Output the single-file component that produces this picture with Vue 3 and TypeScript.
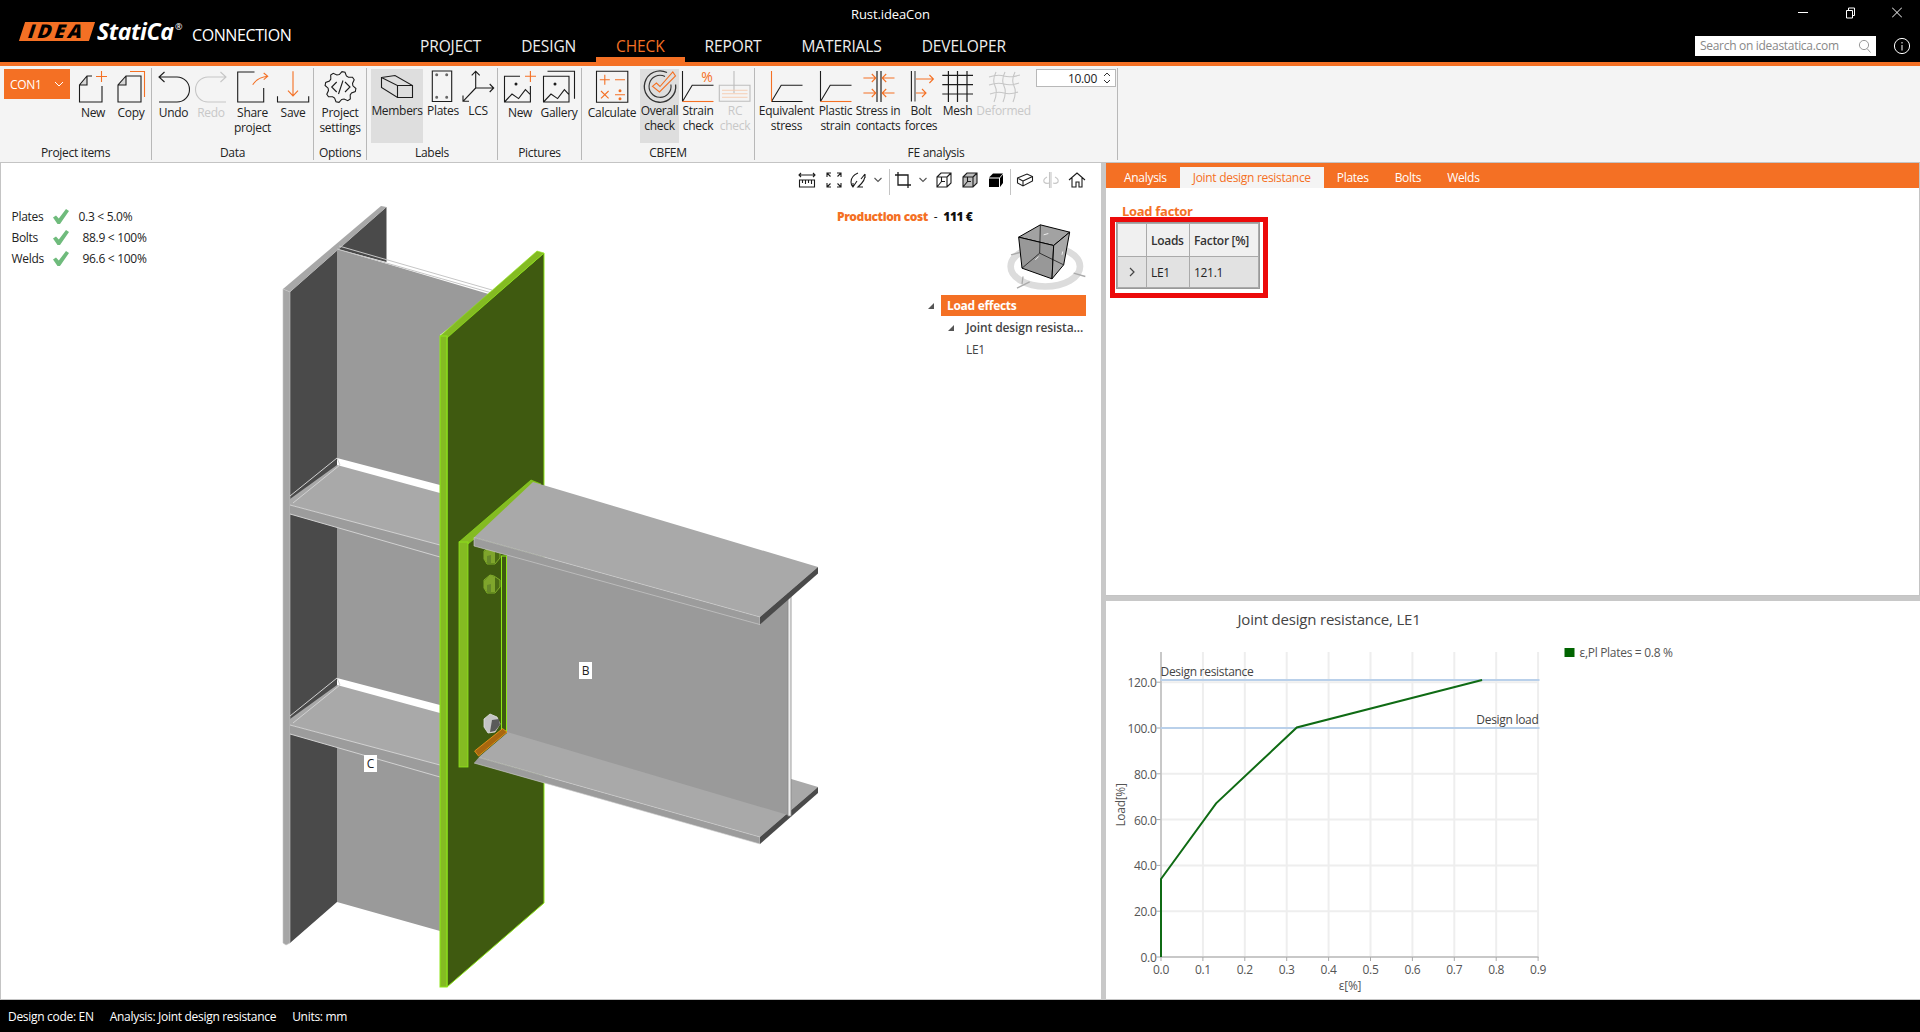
<template>
  <div class="app">
    <!-- Title bar -->
    <header class="titlebar">
      <div class="brand">
        <span class="idea"><span>IDEA</span></span>
        <span class="statica">StatiCa</span><span class="reg">®</span>
        <span class="product">CONNECTION</span>
      </div>
      <div class="title-right">
        <div class="title-row">
          <span class="doc-title">Rust.ideaCon</span>
          <div class="win-btns">
            <svg width="10" height="20" viewBox="0 0 10 20"><path d="M0 10.5H10" stroke="#fff" /></svg>
            <svg width="10" height="20" viewBox="0 0 10 20" fill="none"><path d="M1.5 8.5H7.5V16H1.5ZM3.5 8V6H9.5V13.5H8" stroke="#fff" /></svg>
            <svg width="10" height="20" viewBox="0 0 10 20"><path d="M0 5.5L10 15.5M10 5.5L0 15.5" stroke="#fff" /></svg>
          </div>
        </div>
        <div class="menu-row">
          <nav class="menu">
            <a v-for="m in menu" :key="m" :class="{ active: m === 'CHECK' }">{{ m }}</a>
          </nav>
          <div class="search">
            <span>Search on ideastatica.com</span>
            <svg width="14" height="14" viewBox="0 0 14 14" fill="none"><circle cx="6" cy="6" r="4.6" stroke="#999" /><path d="M9 9.5L12.5 13.5" stroke="#999" /></svg>
          </div>
          <svg class="info" width="18" height="18" viewBox="0 0 18 18" fill="none">
            <circle cx="9" cy="9" r="7.6" stroke="#fff" />
            <path d="M9 8V13.5M9 5V6.5" stroke="#fff" />
          </svg>
        </div>
      </div>
    </header>

    <!-- Ribbon -->
    <section class="ribbon">
      <div v-for="g in groups" :key="g.label" class="group" :style="{ width: g.width + 'px' }">
        <div class="group-body" :style="{ paddingLeft: g.pad + 'px' }">
          <div v-if="g.con" class="con-btn">
            <span>CON1</span>
            <svg width="10" height="6" viewBox="0 0 10 6" fill="none"><path d="M1 1L5 5L9 1" stroke="#fff" /></svg>
          </div>
          <div
            v-for="it in g.items"
            :key="it.label"
            class="rb-item"
            :class="{ on: it.on, off: it.off, tight: it.tight }"
            :style="{ width: it.w + 'px' }"
          >
            <Icon :icon="icons[it.icon]!" :size="32" />
            <span class="rb-label">{{ it.label }}</span>
          </div>
          <div v-if="g.spin" class="spinner">
            <span>10.00</span>
            <svg width="10" height="16" viewBox="0 0 10 16" fill="none"><path d="M2 6L5 3L8 6M2 10L5 13L8 10" stroke="#333" /></svg>
          </div>
        </div>
        <div class="group-label">{{ g.label }}</div>
      </div>
    </section>

    <main class="main">
      <!-- 3D scene -->
      <div class="viewport">
        <svg class="scene" viewBox="1 163 1100 836">
          <!-- column -->
          <polygon points="290,292 386.5,207 386.5,262 337,249 337,902 290,943" fill="#4a4a4a" />
          <polygon points="283,289 381,206 386.5,207 290,292" fill="#a8a8a8" />
          <polygon points="283,289 290,292 290,943 286,945 283,943" fill="#a6a6a6" stroke="#c8c8c8" stroke-width=".6" />
          <polygon points="337,249 492,295 440,335 440,931 337,902" fill="#9a9a9a" />
          <path d="M337 249L492 293M339 246L492 290" stroke="#c6c6c6" fill="none" />
          <!-- stiffeners -->
          <g v-for="s in stiffeners" :key="s">
            <polygon :transform="`translate(0 ${s})`" points="337,458 440,485 440,494 337,466" fill="#fff" />
            <polygon :transform="`translate(0 ${s})`" points="337,465 440,493 440,545 290,505 290,499" fill="#a9a9a9" />
            <polygon :transform="`translate(0 ${s})`" points="290,505 440,545 440,557 290,514" fill="#9c9c9c" />
            <path :transform="`translate(0 ${s})`" d="M290 496L337 458L340 465L293 503M290 505L440 545M290 514L440 557" stroke="#d2d2d2" fill="none" />
          </g>
          <!-- end plate -->
          <polygon points="447,337 544,253 544,903 447,987" fill="#3f5a10" stroke="#8fe81a" />
          <polygon points="440,336 537,251 544,253 447,338" fill="#84bb22" stroke="#8fe81a" stroke-width=".6" />
          <rect x="440" y="336" width="7" height="651" fill="#84bb22" stroke="#8fe81a" />
          <!-- beam lower flange -->
          <polygon points="532,701 818,787 760,837 474,756" fill="#a9a9a9" />
          <polygon points="474,756 760,837 760,844 474,763" fill="#9c9c9c" stroke="#d2d2d2" stroke-width=".6" />
          <polygon points="760,837 818,787 818,793 760,844" fill="#4a4a4a" />
          <!-- beam web -->
          <polygon points="507,552 760,624 788,598 788,815 507,732" fill="#9a9a9a" />
          <rect x="788" y="594" width="3" height="222" fill="#eee" stroke="#888" stroke-width=".8" />
          <!-- fin plate -->
          <polygon points="468,544 507,552 507,733 480,756 474,763 468,767" fill="#3f5a10" />
          <rect x="501.5" y="556" width="5" height="175" fill="#3f5a10" stroke="#8fe81a" stroke-width="1" />
          <polygon points="459,542 531,480 541,484 468,544" fill="#84bb22" stroke="#8fe81a" stroke-width=".6" />
          <rect x="459" y="542" width="9" height="225" fill="#84bb22" stroke="#8fe81a" stroke-width=".8" />
          <!-- bolts -->
          <g v-for="b in greenBolts" :key="b" :transform="`translate(0 ${b})`">
            <polygon points="484,580 490,575 494,576 500,580 500,587 495,593 487,593 484,588" fill="#4a6a14" stroke="#8fc030" stroke-width=".8" />
            <polygon points="484,581 490,575 495,577 495,592 487,592 484,588" fill="#7fa52c" />
            <polygon points="487,585 491,584 491,592 487,592" fill="#66882a" />
          </g>
          <polygon points="484,719 490,714 497,717 500,724 495,732 488,733 484,727" fill="#c4c4c4" stroke="#e2e2e2" stroke-width=".8" />
          <polygon points="492,720 499,719 500,725 495,731 490,732" fill="#5a5a5a" />
          <!-- weld -->
          <polygon points="474.6,751 502.6,728.6 507,732 478.5,756" fill="#a8670f" stroke="#f59a1a" stroke-width=".8" />
          <!-- beam upper flange -->
          <polygon points="533,482 818,567 760,617 474,537.5" fill="#a9a9a9" />
          <polygon points="474,537.5 760,617 760,624.6 474,546" fill="#9c9c9c" stroke="#d2d2d2" stroke-width=".6" />
          <polygon points="760,617 818,567 818,573.6 760,624.6" fill="#4a4a4a" />
        </svg>

        <div class="tag tag-b">B</div>
        <div class="tag tag-c">C</div>

        <div class="results">
          <template v-for="r in results" :key="r.name">
            <span>{{ r.name }}</span>
            <svg width="16" height="16" viewBox="0 0 16 16"><path d="M0 8.5L3 6.5L5.8 9.5L13 0L16 2L7 15H4.5Z" fill="#6fbb7c" /></svg>
            <span :class="{ indent: r.indent }">{{ r.value }}</span>
          </template>
        </div>

        <div class="cost"><b class="cost-name">Production cost</b><span class="cost-sep">-</span><b>111 €</b></div>

        <div class="tools">
          <Icon
            v-for="(t, i) in tools"
            :key="i"
            :icon="t.icon"
            :size="t.size ?? 16"
            :style="{ marginLeft: t.ml + 'px' }"
          />
        </div>

        <svg class="navcube" width="80" height="67" viewBox="680 190 240 200" fill="none">
          <ellipse cx="795" cy="320" rx="104" ry="60" stroke="#dcdcdc" stroke-width="20" />
          <path d="M692 285L718 278M710 385L748 366M725 372L728 350M880 340L915 350" stroke="#aaa" stroke-width="4" />
          <polygon points="715,232 780,195 868,217 820,257" fill="#a2a2a2" stroke="#000" stroke-width="3" />
          <polygon points="715,232 820,257 815,357 725,325" fill="#989898" stroke="#000" stroke-width="3" />
          <polygon points="820,257 868,217 850,315 815,357" fill="#a8a8a8" stroke="#000" stroke-width="3" />
          <path d="M780 195L778 280M778 280L725 325M778 280L850 315" stroke="#000" stroke-width="2" />
          <path d="M790 225L804 221M765 300L775 290M845 285L847 275" stroke="#eee" stroke-width="3" />
        </svg>

        <div class="tree">
          <div class="tree-row root"><i class="caret" /><span>Load effects</span></div>
          <div class="tree-row sub"><i class="caret" /><span>Joint design resista...</span></div>
          <div class="tree-row leaf"><span>LE1</span></div>
        </div>
      </div>

      <div class="splitter" />

      <!-- Right side -->
      <div class="side">
        <div class="side-top">
          <div class="tabs">
            <a v-for="t in tabs" :key="t" :class="{ active: t === 'Joint design resistance' }">{{ t }}</a>
          </div>
          <div class="side-body">
            <h4>Load factor</h4>
            <div class="redbox">
              <table>
                <thead>
                  <tr><th class="c0"></th><th class="c1">Loads</th><th class="c2">Factor [%]</th></tr>
                </thead>
                <tbody>
                  <tr>
                    <td class="exp"><svg width="6" height="10" viewBox="0 0 6 10" fill="none"><path d="M1 1L5 5L1 9" stroke="#444" stroke-width="1.2" /></svg></td>
                    <td>LE1</td>
                    <td>121.1</td>
                  </tr>
                </tbody>
              </table>
            </div>
          </div>
        </div>
        <div class="hsplit" />
        <div class="side-chart">
          <svg class="chart" viewBox="1106 601 813 398">
            <text x="1237" y="625" class="ch-title">Joint design resistance, LE1</text>
            <!-- grid -->
            <line v-for="x in xTicks" :key="'gx' + x.v" :x1="x.px" :x2="x.px" y1="652" y2="957" class="grid" />
            <line v-for="y in yTicks" :key="'gy' + y.v" x1="1160" x2="1538" :y1="y.px" :y2="y.px" class="grid" />
            <line x1="1160.5" x2="1160.5" y1="652" y2="958" class="axis" />
            <line x1="1160" x2="1538" y1="957" y2="957" class="axis" />
            <line v-for="y in yTicks" :key="'ty' + y.v" x1="1156" x2="1160" :y1="y.px" :y2="y.px" class="tick" />
            <line v-for="x in xTicks" :key="'tx' + x.v" :x1="x.px" :x2="x.px" y1="957" y2="961" class="tick" />
            <text v-for="y in yTicks" :key="'ly' + y.v" x="1156" :y="y.px + 5" text-anchor="end" class="ch-tick">{{ y.v }}</text>
            <text v-for="x in xTicks" :key="'lx' + x.v" :x="x.px" y="974" text-anchor="middle" class="ch-tick">{{ x.v }}</text>
            <text x="1349.5" y="990" text-anchor="middle" class="ch-tick">ε[%]</text>
            <text x="1124" y="805" text-anchor="middle" transform="rotate(-90 1124 805)" class="ch-tick">Load[%]</text>
            <!-- limits -->
            <line x1="1160" x2="1539" y1="680" y2="680" class="limit" />
            <line x1="1160" x2="1539" y1="728" y2="728" class="limit" />
            <text x="1160" y="676" class="ch-note">Design resistance</text>
            <text x="1538" y="724" text-anchor="end" class="ch-note">Design load</text>
            <polyline points="1160.5,957 1160.5,879 1215.6,803.3 1296.3,727.5 1481.6,680" class="curve" />
            <!-- legend -->
            <rect x="1564" y="648" width="10" height="9" fill="#006400" />
            <text x="1579" y="657" class="ch-tick">ε,Pl Plates = 0.8 %</text>
          </svg>
        </div>
      </div>
    </main>

    <!-- Status bar -->
    <footer class="status">
      <span>Design code: EN</span>
      <span>Analysis: Joint design resistance</span>
      <span>Units: mm</span>
    </footer>
  </div>
</template>

<script setup lang="ts">
import { h } from "vue";
import type { FunctionalComponent } from "vue";

type Stroke = { d: string; c?: string; f?: string; sw?: number };
type IconDef = { vb?: string; strokes: Stroke[]; mark?: string };

const O = "#f47024";
const K = "#1c1c1c";
const D = "#c6c6c6";

// small renderer for the stroke lists below
const Icon: FunctionalComponent<{ icon: IconDef; size: number }> = (props) =>
  h(
    "svg",
    {
      width: props.size,
      height: props.size,
      viewBox: props.icon.vb ?? "0 0 32 32",
      fill: "none",
      style: { flex: "none", overflow: "visible" },
    },
    [
      ...props.icon.strokes.map((s) =>
        h("path", {
          d: s.d,
          stroke: s.f ? "none" : s.c ?? K,
          fill: s.f ?? "none",
          "stroke-width": s.sw ?? 1.1,
        }),
      ),
      props.icon.mark
        ? h("text", { x: 25, y: 10.5, "text-anchor": "middle", fill: O, "font-size": 14, "font-family": "Open Sans" }, props.icon.mark)
        : null,
    ],
  );

// gear outline for project settings
function gear(cx: number, cy: number, r1: number, r2: number, n: number) {
  const pts: string[] = [];
  for (let i = 0; i < n * 4; i++) {
    const a = (i * Math.PI * 2) / (n * 4) + Math.PI / (n * 4);
    const r = i % 4 < 2 ? r2 : r1;
    pts.push(`${(cx + r * Math.cos(a)).toFixed(1)} ${(cy + r * Math.sin(a)).toFixed(1)}`);
  }
  return "M" + pts.join("L") + "Z";
}

const sun = "M10.5 13a1.5 1.5 0 1 0 3 0a1.5 1.5 0 1 0 -3 0";
const dot = (x: number, y: number) => `M${x - 1.5} ${y}a1.5 1.5 0 1 0 3 0a1.5 1.5 0 1 0 -3 0`;

const icons: Record<string, IconDef> = {
  newDoc: {
    strokes: [
      { d: "M3 14L10 6V14Z", f: "#d8d8d8" },
      { d: "M25 15V31H2.5V14L10 5H15M2.5 14H10V5" },
      { d: "M19 5.5H30M24.5 0V11", c: O },
    ],
  },
  copy: {
    strokes: [
      { d: "M3.5 14L11 6V14Z", f: "#d8d8d8" },
      { d: "M26 31H3V14L11 5H26ZM3 14H11V5" },
      { d: "M15 .5H29.5V26", c: O },
    ],
  },
  undo: { strokes: [{ d: "M1 6H19A12.5 12.5 0 0 1 19 31H1M6.5 1L1 6L6.5 11" }] },
  redo: { strokes: [{ d: "M31 6H13A12.5 12.5 0 0 0 13 31H31M25.5 1L31 6L25.5 11", c: D }] },
  share: { strokes: [{ d: "M17.5 1H.7V31H26.7V17" }, { d: "M15.7 13.7Q21 6 30.7 5.3M26.7 2L30.7 5.3L26.7 8.7", c: O }] },
  save: { strokes: [{ d: "M.5 25.3V31H31.7V25.3" }, { d: "M16 .3V25M11 19.7L16 25L21 19.7", c: O }] },
  settings: {
    strokes: [
      { d: gear(16.5, 16, 12.5, 15.5, 8) },
      { d: "M12.7 11L7.7 16L12.7 21M21 11L26 16L21 21M19 9.5L14.5 23" },
    ],
  },
  members: { strokes: [{ d: "M.5 6.5L14 4.5L31.5 14.5V26.5H16.5L.5 16.5ZM.5 6.5L16.5 14.5V26.5M16.5 14.5H31.5" }] },
  plates: {
    strokes: [
      { d: "M5.3 0H24.7V30.5H5.3Z" },
      { d: dot(9.7, 3.7) + dot(19.7, 3.7) + dot(9.7, 26.3) + dot(19.7, 26.3), f: "#666" },
    ],
  },
  lcs: { strokes: [{ d: "M13.7 17V.3M9.7 4.3L13.7 .3L17.7 4.3M13.7 17H31.7M27.7 13L31.7 17L27.7 21M13.7 17L1 30.3M1 24.5V30.3H7" }] },
  picNew: {
    strokes: [
      { d: "M26.4 15V31H.5V5.3H16M.5 31L8 23L14.6 27.6L21.4 18.7L26.4 23.7" },
      { d: sun, f: K },
      { d: "M21 5.3H32M26.4 0V11", c: O },
    ],
  },
  gallery: {
    strokes: [
      { d: "M.5 5.3H26V31H.5ZM.5 31L8 23L14.6 27.6L21.4 18.7L26 23.7M4.5 .3H31.5V27.7" },
      { d: sun, f: K },
    ],
  },
  calc: {
    strokes: [
      { d: "M.5 .3H31.8V31.3H.5Z" },
      { d: "M3.8 8.7H13.8M8.8 3.7V13.7M19 8.7H29M5 20L12.6 27.4M12.6 20L5 27.4M19 23.7H29", c: O },
      { d: dot(24, 19.7) + dot(24, 27.7), f: O },
    ],
  },
  overall: {
    strokes: [
      { d: "M23 1.5A15.7 15.7 0 1 0 31.6 13.5", c: "#333", sw: 1.3 },
      { d: "M21 5.5A11 11 0 1 0 26.9 13.5", c: "#333", sw: 1.1 },
      { d: "M8.4 15.3L12.4 12L16 15.5L28.8 1L31.5 5L15.5 21Z", c: O, sw: 1.1 },
    ],
  },
  strain: { mark: "%", strokes: [{ d: "M.5 0V30.5M.5 30.5L10.2 14.3H31.5" }, { d: "M.5 30.5H31.5", c: O }] },
  rc: {
    strokes: [
      { d: "M15 0V22M.3 14.3H31V30.3H.3Z", c: "#bdbdbd" },
      { d: "M3 19.3H28.5M3 22.7H28.5M3 26.3H28.5", c: "#f5cdb2" },
    ],
  },
  equivalent: { strokes: [{ d: "M.5 30.5L10.2 14.3H31.5M.5 30.5H31.5" }, { d: "M.5 0V30.5", c: O }] },
  plastic: { strokes: [{ d: "M.5 0V30.5M.5 30.5L10.2 14.3H31.5" }, { d: "M.5 30.5H31.5", c: O }] },
  contacts: {
    strokes: [
      { d: "M15 0V31M19 0V31", c: "#707070", sw: 1.9 },
      { d: "M1.4 7H13.8M9.8 3L13.8 7L9.8 11M32.5 7H20.2M24.2 3L20.2 7L24.2 11M1.4 22H13.8M9.8 18L13.8 22L9.8 26M32.5 22H20.2M24.2 18L20.2 22L24.2 26", c: O },
    ],
  },
  boltForces: {
    strokes: [
      { d: "M6.4 0V30.5" },
      { d: "M10 0V30.5", c: "#666", sw: 1.4 },
      { d: "M11 8H28.4M24.4 4L28.4 8L24.4 12M11 22H21M17 18L21 22L17 26", c: O },
    ],
  },
  mesh: { strokes: [{ d: "M6.4 0V31M15.5 0V31M25 0V31M.3 4.3H31M.3 13.7H31M.3 23H31", sw: 1.2 }] },
  deformed: {
    strokes: [
      {
        d: "M8 1Q4 9 7 15T6 31M17 1Q13 9 16 15T15 31M27 1Q23 9 26 15T25 31M1 6Q10 3 16 5T32 4M1 14Q10 11 16 13T31 12M2 23Q10 20 16 22T30 21",
        c: D,
      },
    ],
  },
};

const menu = ["PROJECT", "DESIGN", "CHECK", "REPORT", "MATERIALS", "DEVELOPER"];

const groups = [
  {
    label: "Project items",
    width: 152,
    pad: 4,
    con: true,
    items: [
      { label: "New", icon: "newDoc", w: 38 },
      { label: "Copy", icon: "copy", w: 38 },
    ],
  },
  {
    label: "Data",
    width: 162,
    pad: 2,
    items: [
      { label: "Undo", icon: "undo", w: 39 },
      { label: "Redo", icon: "redo", w: 36, off: true },
      { label: "Share\nproject", icon: "share", w: 47 },
      { label: "Save", icon: "save", w: 34 },
    ],
  },
  { label: "Options", width: 53, pad: 0, items: [{ label: "Project\nsettings", icon: "settings", w: 52 }] },
  {
    label: "Labels",
    width: 131,
    pad: 4,
    items: [
      { label: "Members", icon: "members", w: 52, on: true, tight: true },
      { label: "Plates", icon: "plates", w: 40, tight: true },
      { label: "LCS", icon: "lcs", w: 30, tight: true },
    ],
  },
  {
    label: "Pictures",
    width: 84,
    pad: 2,
    items: [
      { label: "New", icon: "picNew", w: 40 },
      { label: "Gallery", icon: "gallery", w: 38 },
    ],
  },
  {
    label: "CBFEM",
    width: 173,
    pad: 2,
    items: [
      { label: "Calculate", icon: "calc", w: 56 },
      { label: "Overall\ncheck", icon: "overall", w: 39, on: true, tight: true },
      { label: "Strain\ncheck", icon: "strain", w: 38, tight: true },
      { label: "RC\ncheck", icon: "rc", w: 36, off: true, tight: true },
    ],
  },
  {
    label: "FE analysis",
    width: 363,
    pad: 2,
    spin: true,
    items: [
      { label: "Equivalent\nstress", icon: "equivalent", w: 59, tight: true },
      { label: "Plastic\nstrain", icon: "plastic", w: 39, tight: true },
      { label: "Stress in\ncontacts", icon: "contacts", w: 46, tight: true },
      { label: "Bolt\nforces", icon: "boltForces", w: 40, tight: true },
      { label: "Mesh", icon: "mesh", w: 33, tight: true },
      { label: "Deformed", icon: "deformed", w: 59, off: true, tight: true },
    ],
  },
] as {
  label: string;
  width: number;
  pad: number;
  con?: boolean;
  spin?: boolean;
  items: { label: string; icon: string; w: number; on?: boolean; off?: boolean; tight?: boolean }[];
}[];

const chev: IconDef = { vb: "0 0 8 8", strokes: [{ d: "M.5 2L4 5.5L7.5 2", c: "#555" }] };
const cubeLines = "M1 5L5 1H15V11L11 15H1ZM1 5H11V15M11 5L15 1M5.5 5V9.5H9M5.5 9.5L1 15";
const tools: { icon: IconDef; ml: number; size?: number }[] = [
  {
    ml: 0,
    icon: {
      vb: "0 0 16 16",
      strokes: [{ d: "M0 3H16M2 1L0 3L2 5M14 1L16 3L14 5M.5 8H15.5V15H.5ZM3.5 8V11M6.5 8V12M9.5 8V11M12.5 8V12" }],
    },
  },
  { ml: 11, icon: { vb: "0 0 16 16", strokes: [{ d: "M1 5V1H5M1 1L4.5 4.5M15 5V1H11M15 1L11.5 4.5M1 11V15H5M1 15L4.5 11.5M15 11V15H11M15 15L11.5 11.5" }] } },
  { ml: 8, icon: { vb: "0 0 16 16", strokes: [{ d: "M8 1Q1 4 1 10Q1 13 3 15L7 9M3 15V11M15 2Q16 8 8 15H13M15 2L11 7M15 2V6" }] } },
  { ml: 8, size: 8, icon: chev },
  { ml: 13, icon: { vb: "0 0 16 16", strokes: [{ d: "M3 0V13H16M0 3H13V16", sw: 1.3 }] } },
  { ml: 8, size: 8, icon: chev },
  { ml: 9, icon: { vb: "0 0 16 16", strokes: [{ d: cubeLines }] } },
  { ml: 10, icon: { vb: "0 0 16 16", strokes: [{ d: "M1 5L5 1H15V11L11 15H1Z", f: "#bdbdbd" }, { d: cubeLines }] } },
  { ml: 10, icon: { vb: "0 0 16 16", strokes: [{ d: "M1 5.5L5 1.5H15L11.5 5.5ZM1 6.5H11V15H1ZM12 6L15 2.5V11L12 15Z", f: "#000" }] } },
  { ml: 13, icon: { vb: "0 0 16 16", strokes: [{ d: "M.5 6L10 2L15.5 4.5V9L6 14L.5 11ZM.5 6L6 9V14M6 9L15.5 4.5" }] } },
  { ml: 10, icon: { vb: "0 0 16 16", strokes: [{ d: "M8 0V16M6.5 0V16M4 5Q0 7 1 10Q3 12 6 11M12 5Q16 7 15 10Q13 12 10 11", c: D }] } },
  { ml: 10, icon: { vb: "0 0 16 16", strokes: [{ d: "M0 8L8 1L16 8M3 6V15H7V10H10V15H13V6" }] } },
];

const stiffeners = [0, 220];
const greenBolts = [-29, 0];

const results = [
  { name: "Plates", value: "0.3 < 5.0%", indent: false },
  { name: "Bolts", value: "88.9 < 100%", indent: true },
  { name: "Welds", value: "96.6 < 100%", indent: true },
];

const tabs = ["Analysis", "Joint design resistance", "Plates", "Bolts", "Welds"];

const xTicks = ["0.0", "0.1", "0.2", "0.3", "0.4", "0.5", "0.6", "0.7", "0.8", "0.9"].map((v, i) => ({
  v,
  px: 1160.5 + i * 41.9,
}));
const yTicks = ["0.0", "20.0", "40.0", "60.0", "80.0", "100.0", "120.0"].map((v, i) => ({
  v,
  px: 957 - i * 45.8,
}));
</script>

<style>
body {
  margin: 0;
  background: #fff;
}
</style>

<style scoped>
.app {
  width: 1920px;
  height: 1032px;
  display: flex;
  flex-direction: column;
  overflow: hidden;
  font-family: "Open Sans", "Noto Sans", sans-serif;
  font-size: 12px;
  letter-spacing: -0.3px;
  color: #222;
}

/* Title bar */
.titlebar {
  height: 62px;
  background: #000;
  color: #fff;
  display: flex;
  border-bottom: 4px solid #f47024;
  flex: none;
}
.brand {
  width: 400px;
  flex: none;
  display: flex;
  align-items: flex-start;
  padding: 22px 0 0 22px;
  box-sizing: border-box;
}
.idea {
  width: 70px;
  height: 19px;
  flex: none;
  background: #f47024;
  transform: skewX(-18deg);
  display: flex;
  align-items: center;
  justify-content: center;
  margin-right: 5px;
}
.idea span {
  color: #000;
  font-weight: 800;
  font-size: 19px;
  letter-spacing: 3px;
  line-height: 19px;
}
.statica {
  width: 78px;
  flex: none;
  font-size: 23px;
  font-weight: 700;
  font-style: italic;
  line-height: 19px;
  letter-spacing: -0.4px;
}
.reg {
  width: 9px;
  flex: none;
  font-size: 9px;
  line-height: 10px;
}
.product {
  font-size: 16px;
  line-height: 26px;
  margin-left: 8px;
  letter-spacing: -0.4px;
}
.title-right {
  flex: 1;
  display: flex;
  flex-direction: column;
}
.title-row {
  height: 28px;
  display: flex;
}
.doc-title {
  margin-left: 451px;
  font-size: 13px;
  line-height: 28px;
  letter-spacing: -0.1px;
}
.win-btns {
  margin-left: auto;
  display: flex;
  gap: 37px;
  padding: 2px 18px 0 0;
  height: 20px;
}
.menu-row {
  flex: 1;
  display: flex;
  align-items: flex-start;
}
.menu {
  display: flex;
  height: 34px;
}
.menu a {
  padding: 0 20px;
  font-size: 15.5px;
  line-height: 36px;
  height: 29px;
  color: #eee;
  letter-spacing: -0.12px;
  border-bottom: 5px solid transparent;
}
.menu a.active {
  color: #f47024;
  border-bottom-color: #f47024;
}
.search {
  margin: 8px 0 0 auto;
  width: 181px;
  height: 20px;
  box-sizing: border-box;
  background: #fff;
  color: #888;
  font-size: 12px;
  line-height: 22px;
  padding: 0 4px 0 5px;
  display: flex;
  align-items: center;
  justify-content: space-between;
}
.info {
  margin: 9px 9px 0 17px;
}

/* Ribbon */
.ribbon {
  height: 96px;
  background: #f4f4f4;
  border-bottom: 1px solid #c4c4c4;
  display: flex;
  flex: none;
}
.group {
  margin-top: 2px;
  height: 92px;
  box-sizing: border-box;
  border-right: 1px solid #b8b8b8;
  display: flex;
  flex-direction: column;
  flex: none;
}
.group-body {
  height: 77px;
  padding-top: 1px;
  box-sizing: border-box;
  display: flex;
}
.group-label {
  height: 15px;
  line-height: 16px;
  text-align: center;
  color: #222;
}
.con-btn {
  width: 66px;
  height: 30px;
  flex: none;
  box-sizing: border-box;
  margin-right: 4px;
  background: #f47024;
  color: #fff;
  padding: 0 6px;
  display: flex;
  align-items: center;
  justify-content: space-between;
}
.rb-item {
  height: 74px;
  flex: none;
  display: flex;
  flex-direction: column;
  align-items: center;
  padding-top: 2px;
  box-sizing: border-box;
}
.rb-label {
  margin-top: 2px;
  line-height: 15px;
  text-align: center;
  white-space: pre-line;
}
.rb-item.tight .rb-label {
  margin-top: 0;
}
.rb-item.on {
  background: #dedede;
}
.rb-item.off {
  color: #c8c8c8;
}
.spinner {
  width: 80px;
  height: 18px;
  margin-left: 3px;
  box-sizing: border-box;
  background: #fff;
  border: 1px solid #b8b8b8;
  display: flex;
  align-items: center;
  justify-content: flex-end;
  gap: 5px;
  padding-right: 3px;
}

/* Main area */
.main {
  flex: 1;
  min-height: 0;
  display: flex;
}
.viewport {
  width: 1101px;
  flex: none;
  position: relative;
  box-sizing: border-box;
  background: #fff;
  border-left: 1px solid #c4c4c4;
  border-bottom: 1px solid #c4c4c4;
}
.scene {
  position: absolute;
  inset: 0;
  width: 100%;
  height: 100%;
}
.tag {
  position: absolute;
  background: #fff;
  width: 13px;
  height: 17px;
  line-height: 17px;
  text-align: center;
}
.tag-b {
  left: 578px;
  top: 499px;
}
.tag-c {
  left: 363px;
  top: 592px;
}
.results {
  position: absolute;
  left: 10.5px;
  top: 43px;
  display: grid;
  grid-template-columns: 41px 26px auto;
  grid-auto-rows: 21px;
  line-height: 21px;
  align-items: center;
}
.indent {
  padding-left: 4px;
}
.cost {
  position: absolute;
  left: 836px;
  top: 46px;
  line-height: 16px;
  font-weight: 700;
  color: #111;
  display: flex;
  letter-spacing: -0.42px;
}
.cost-name {
  color: #f47024;
}
.cost-sep {
  margin: 0 6px;
  font-weight: 400;
}
.tools {
  position: absolute;
  left: 798px;
  top: 9px;
  display: flex;
  align-items: center;
}
.tools::before,
.tools::after {
  content: "";
  position: absolute;
  top: -3px;
  width: 1px;
  height: 26px;
  background: #c4c4c4;
}
.tools::before {
  left: 90px;
}
.tools::after {
  left: 211px;
}
.navcube {
  position: absolute;
  left: 1005.7px;
  top: 60.3px;
}
.tree {
  position: absolute;
  left: 924px;
  top: 132px;
  width: 161px;
}
.tree-row {
  display: flex;
  align-items: center;
  position: relative;
  height: 22px;
  font-weight: 600;
  color: #444;
  padding-left: 41px;
}
.tree-row.root {
  height: 21px;
  margin-left: 16px;
  padding-left: 6px;
  background: #f47024;
  color: #fff;
  font-weight: 700;
}
.tree-row.sub {
  letter-spacing: -0.1px;
}
.tree-row.leaf {
  font-weight: 400;
}
.caret {
  position: absolute;
  width: 0;
  height: 0;
  border-bottom: 6px solid #555;
  border-left: 6px solid transparent;
}
.root .caret {
  left: -13px;
  top: 8px;
}
.sub .caret {
  left: 23px;
  top: 9px;
}
.splitter {
  width: 5px;
  flex: none;
  background: #c8c8c8;
}

/* Right side */
.side {
  flex: 1;
  min-width: 0;
  display: flex;
  flex-direction: column;
}
.side-top {
  height: 433px;
  box-sizing: border-box;
  flex: none;
  border-right: 1px solid #c4c4c4;
  border-bottom: 1px solid #c4c4c4;
}
.tabs {
  height: 25px;
  background: #f47024;
  display: flex;
  align-items: flex-end;
  padding-left: 5px;
}
.tabs a {
  height: 21px;
  line-height: 21px;
  padding: 0 13px;
  color: #fff;
}
.tabs a.active {
  background: #f4f4f4;
  color: #f47024;
}
.side-body {
  padding: 15px 0 0 4px;
}
.side-body h4 {
  margin: 0 0 -2px 12px;
  font-size: 13px;
  line-height: 16px;
  font-weight: 700;
  color: #f47024;
}
.redbox {
  width: 158px;
  height: 81px;
  box-sizing: border-box;
  border: 5px solid #ec0a0a;
  padding: 1px 0 0 2px;
}
table {
  border-collapse: collapse;
  background: #e2e2e2;
  outline: 1px solid #999;
  width: 141px;
  table-layout: fixed;
}
th,
td {
  box-sizing: border-box;
  border: 1px solid #aaa;
  padding: 0 0 0 4px;
  text-align: left;
}
th {
  height: 33px;
  background: #f0f0f0;
  font-weight: 600;
  color: #333;
}
td {
  height: 31px;
}
.c0 {
  width: 29px;
}
.c1 {
  width: 43px;
}
.c2 {
  width: 69px;
}
.exp {
  padding-left: 11px;
}
.hsplit {
  height: 5px;
  background: #c8c8c8;
  flex: none;
}
.side-chart {
  flex: 1;
  min-height: 0;
  box-sizing: border-box;
  border-bottom: 1px solid #c4c4c4;
}
.chart {
  display: block;
  width: 100%;
  height: 100%;
}
.ch-title {
  font-size: 15px;
  letter-spacing: -0.2px;
  fill: #444;
}
.ch-tick {
  font-size: 12px;
  fill: #555;
}
.ch-note {
  font-size: 12px;
  fill: #444;
}
.grid {
  stroke: #eeeeee;
  stroke-width: 2;
}
.axis {
  stroke: #c8c8c8;
  stroke-width: 2;
}
.tick {
  stroke: #aaa;
}
.limit {
  stroke: #b9d0ea;
  stroke-width: 2;
}
.curve {
  fill: none;
  stroke: #0f6b14;
  stroke-width: 2;
}

/* Status bar */
.status {
  height: 32px;
  flex: none;
  background: #000;
  color: #fff;
  display: flex;
  align-items: center;
  gap: 16px;
  padding-left: 8px;
}
</style>
